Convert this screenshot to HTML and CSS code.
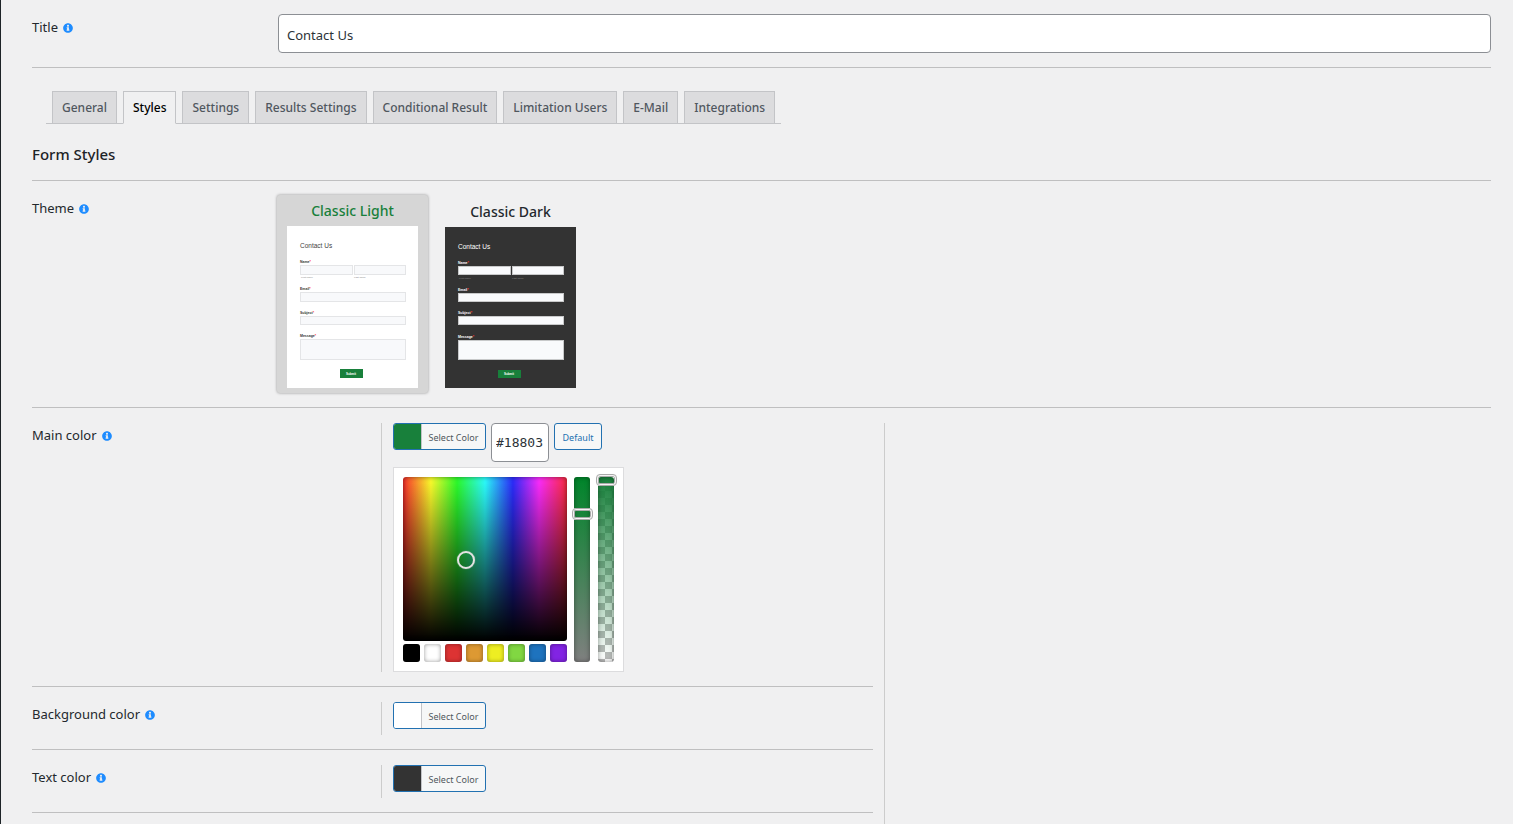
FILE: index.html
```
<!DOCTYPE html>
<html lang="en">
<head>
    <meta charset="UTF-8">
    <meta name="viewport" content="width=device-width, initial-scale=1.0">
    <title>Edit Form</title>
    <link rel="stylesheet" href="styles.css">
</head>
<body>
    <svg class="sprite" aria-hidden="true">
        <symbol id="icon-info" viewBox="0 0 512 512">
            <path d="M256 8C119 8 8 119 8 256s111 248 248 248 248-111 248-248S393 8 256 8zm0 80c28 0 50 22 50 50s-22 50-50 50-50-22-50-50 22-50 50-50zm70 296c0 7-5 12-12 12h-116c-7 0-12-5-12-12v-34c0-7 5-12 12-12h12v-64h-12c-7 0-12-5-12-12v-34c0-7 5-12 12-12h92c7 0 12 5 12 12v110h12c7 0 12 5 12 12v34z"/>
        </symbol>
    </svg>

    <main class="form-editor">
        <div class="row">
            <div class="row-label">
                <label for="form-title">Title</label>
                <a class="info" href="#" aria-label="Help"><svg><use href="#icon-info"/></svg></a>
            </div>
            <div class="row-field">
                <input type="text" id="form-title" class="text-input" value="Contact Us">
            </div>
        </div>

        <nav class="tabs">
            <a href="#general" class="tab">General</a>
            <a href="#styles" class="tab active">Styles</a>
            <a href="#settings" class="tab">Settings</a>
            <a href="#results" class="tab">Results Settings</a>
            <a href="#conditional" class="tab">Conditional Result</a>
            <a href="#limitation" class="tab">Limitation Users</a>
            <a href="#email" class="tab">E-Mail</a>
            <a href="#integrations" class="tab">Integrations</a>
        </nav>

        <h1 class="section-title">Form Styles</h1>

        <div class="row">
            <div class="row-label">
                <span>Theme</span>
                <a class="info" href="#" aria-label="Help"><svg><use href="#icon-info"/></svg></a>
            </div>
            <div class="row-field themes">
                <label class="theme selected">
                    <input type="radio" name="theme" checked>
                    <span class="theme-name">Classic Light</span>
                    <svg class="preview light" viewBox="0 0 131 162">
                        <rect class="page" width="131" height="162"/>
                        <text class="heading" x="13" y="22">Contact Us</text>
                        <text class="name" x="13" y="37">Name<tspan class="req">*</tspan></text>
                        <rect class="box" x="13.5" y="39.5" width="52" height="9"/>
                        <rect class="box" x="67.5" y="39.5" width="51" height="9"/>
                        <text class="hint" x="14" y="52">First name</text>
                        <text class="hint" x="67" y="52">Last name</text>
                        <text class="name" x="13" y="64">Email<tspan class="req">*</tspan></text>
                        <rect class="box" x="13.5" y="66.5" width="105" height="9"/>
                        <text class="name" x="13" y="88">Subject<tspan class="req">*</tspan></text>
                        <rect class="box" x="13.5" y="90.5" width="105" height="8"/>
                        <text class="name" x="13" y="111">Message<tspan class="req">*</tspan></text>
                        <rect class="box" x="13.5" y="113.5" width="105" height="20"/>
                        <rect class="submit" x="53" y="143" width="23" height="9"/>
                        <text class="submit-text" x="64" y="149">Submit</text>
                    </svg>
                </label>
                <label class="theme">
                    <input type="radio" name="theme">
                    <span class="theme-name">Classic Dark</span>
                    <svg class="preview dark" viewBox="0 0 131 161">
                        <rect class="page" width="131" height="161"/>
                        <text class="heading" x="13" y="22">Contact Us</text>
                        <text class="name" x="13" y="37">Name<tspan class="req">*</tspan></text>
                        <rect class="box" x="13.5" y="39.5" width="52" height="8"/>
                        <rect class="box" x="67.5" y="39.5" width="51" height="8"/>
                        <text class="hint" x="14" y="52">First name</text>
                        <text class="hint" x="67" y="52">Last name</text>
                        <text class="name" x="13" y="64">Email<tspan class="req">*</tspan></text>
                        <rect class="box" x="13.5" y="66.5" width="105" height="8"/>
                        <text class="name" x="13" y="87">Subject<tspan class="req">*</tspan></text>
                        <rect class="box" x="13.5" y="89.5" width="105" height="8"/>
                        <text class="name" x="13" y="111">Message<tspan class="req">*</tspan></text>
                        <rect class="box" x="13.5" y="113.5" width="105" height="19"/>
                        <rect class="submit" x="53" y="143" width="23" height="8"/>
                        <text class="submit-text" x="64" y="148">Submit</text>
                    </svg>
                </label>
            </div>
        </div>

        <div class="style-columns">
            <div class="style-options">
                <div class="option">
                    <div class="option-label">
                        <span>Main color</span>
                        <a class="info" href="#" aria-label="Help"><svg><use href="#icon-info"/></svg></a>
                    </div>
                    <div class="option-field">
                        <div class="color-controls">
                            <button type="button" class="color-button">
                                <span class="swatch green"></span>
                                <span class="color-text">Select Color</span>
                            </button>
                            <input type="text" class="hex-input" value="#18803" aria-label="Main color value">
                            <button type="button" class="default-button">Default</button>
                        </div>
                        <div class="picker">
                            <div class="picker-main">
                                <div class="square"><span class="handle"></span></div>
                                <div class="palette">
                                    <button type="button" class="black" aria-label="Black"></button>
                                    <button type="button" class="white" aria-label="White"></button>
                                    <button type="button" class="red" aria-label="Red"></button>
                                    <button type="button" class="orange" aria-label="Orange"></button>
                                    <button type="button" class="yellow" aria-label="Yellow"></button>
                                    <button type="button" class="lime" aria-label="Lime"></button>
                                    <button type="button" class="blue" aria-label="Blue"></button>
                                    <button type="button" class="purple" aria-label="Purple"></button>
                                </div>
                            </div>
                            <div class="strip saturation">
                                <input type="range" min="0" max="100" value="81" aria-label="Saturation">
                            </div>
                            <div class="strip alpha">
                                <input type="range" min="0" max="100" value="100" aria-label="Opacity">
                            </div>
                        </div>
                    </div>
                </div>

                <div class="option">
                    <div class="option-label">
                        <span>Background color</span>
                        <a class="info" href="#" aria-label="Help"><svg><use href="#icon-info"/></svg></a>
                    </div>
                    <div class="option-field">
                        <button type="button" class="color-button">
                            <span class="swatch white"></span>
                            <span class="color-text">Select Color</span>
                        </button>
                    </div>
                </div>

                <div class="option">
                    <div class="option-label">
                        <span>Text color</span>
                        <a class="info" href="#" aria-label="Help"><svg><use href="#icon-info"/></svg></a>
                    </div>
                    <div class="option-field">
                        <button type="button" class="color-button">
                            <span class="swatch dark"></span>
                            <span class="color-text">Select Color</span>
                        </button>
                    </div>
                </div>
            </div>
            <div class="style-preview"></div>
        </div>
    </main>
</body>
</html>
```

FILE: styles.css
```
* {
    box-sizing: border-box;
}

body {
    margin: 0;
    background: #f0f0f1;
    color: #23282d;
    font-family: "Noto Sans", "Open Sans", sans-serif;
    font-size: 13px;
    line-height: 20px;
}

button,
input {
    font-family: inherit;
    margin: 0;
}

.sprite {
    display: none;
}

.form-editor {
    display: flex;
    flex-direction: column;
    min-height: 100vh;
    padding: 0 22px 0 31px;
    border-left: 1px solid #1d2327;
}

.row {
    display: flex;
    padding: 14px 0;
    border-bottom: 1px solid #bfbfc0;
}

.row-label {
    flex: 0 0 246px;
    padding-top: 3px;
}

.row-field {
    flex: 1;
}

.info svg {
    width: 10px;
    height: 10px;
    margin-left: 2px;
    fill: #1e8cff;
    vertical-align: -1px;
}

.text-input {
    display: block;
    width: 100%;
    height: 39px;
    padding: 2px 8px 0;
    border: 1px solid #8c8f94;
    border-radius: 4px;
    background: #fff;
    color: #2c3338;
    font-size: 13px;
}

/* Tabs */
.tabs {
    display: flex;
    align-self: flex-start;
    gap: 6px;
    margin: 23px 0 0 14px;
    padding: 0 6px;
    border-bottom: 1px solid #c3c4c7;
}

.tab {
    height: 33px;
    margin-bottom: -1px;
    padding: 0 9px;
    border: 1px solid #c3c4c7;
    background: #dcdcde;
    color: #50575e;
    font-size: 12px;
    font-weight: 500;
    line-height: 31px;
    text-decoration: none;
}

.tab.active {
    border-bottom-color: #f0f0f1;
    background: #f0f0f1;
    color: #000;
}

.section-title {
    margin: 0;
    padding: 18px 0 14px;
    border-bottom: 1px solid #bfbfc0;
    color: #1d2327;
    font-size: 15px;
    font-weight: 500;
    line-height: 24px;
}

/* Theme cards */
.themes {
    display: flex;
    gap: 7px;
}

.theme {
    display: flex;
    flex-direction: column;
    align-items: center;
    padding: 7px 10px 5px;
    border-radius: 3px;
}

.theme.selected {
    margin-left: -1px;
    padding-top: 6px;
    background: #d6d6d6;
    box-shadow: 0 0 3px rgba(0, 0, 0, 0.4);
}

.theme.selected .theme-name {
    color: #18803b;
}

.theme input {
    position: absolute;
    opacity: 0;
}

.theme-name {
    margin-bottom: 5px;
    font-size: 14px;
    font-weight: 500;
}

.preview {
    display: block;
    width: 131px;
    height: 162px;
    font-family: "Liberation Sans", sans-serif;
}

.preview .page {
    fill: #fff;
}

.preview .heading {
    fill: #444;
    font-size: 6.5px;
}

.preview .name {
    fill: #333;
    font-size: 3.5px;
    font-weight: bold;
}

.preview .hint {
    fill: #888;
    font-size: 2.5px;
}

.preview .req {
    fill: #f33;
}

.preview .box {
    fill: #f8f9fb;
    stroke: #e4e5e7;
}

.preview .submit {
    fill: #18803b;
}

.preview .submit-text {
    fill: #fff;
    font-size: 3px;
    font-weight: bold;
    text-anchor: middle;
}

.preview.dark {
    height: 161px;
}

.preview.dark .page {
    fill: #333;
}

.preview.dark .heading,
.preview.dark .name {
    fill: #fff;
}

.preview.dark .box {
    fill: #f9fafc;
    stroke: #c8c9ca;
}

/* Color options */
.style-columns {
    display: flex;
    flex: 1;
    padding-top: 15px;
}

.style-options {
    flex: 0 0 58.4%;
    padding-right: 11px;
}

.style-preview {
    flex: 1;
    border-left: 1px solid #ccc;
}

.option {
    display: flex;
    margin-bottom: 15px;
    padding-bottom: 14px;
    border-bottom: 1px solid #bfbfc0;
}

.option-label {
    flex: 0 0 349px;
    padding-top: 2px;
}

.option-field {
    flex: 1;
    min-height: 33px;
    padding-left: 11px;
    border-left: 1px solid #ccc;
}

.color-controls {
    display: flex;
    align-items: flex-start;
    gap: 5px;
}

.color-button,
.default-button {
    height: 27px;
    padding: 0;
    border: 1px solid #2271b1;
    border-radius: 3px;
    background: #f6f7f7;
    color: #2271b1;
    font-size: 9px;
    line-height: 27px;
}

.color-button {
    display: flex;
    width: 93px;
    overflow: hidden;
}

.swatch {
    width: 28px;
    height: 25px;
    border-right: 1px solid #c3c4c7;
}

.swatch.green {
    background: #18803b;
}

.swatch.white {
    background: #fff;
}

.swatch.dark {
    background: #333;
}

.color-text {
    flex: 1;
    color: #50575e;
    text-align: center;
}

.default-button {
    width: 48px;
}

.hex-input {
    width: 58px;
    height: 39px;
    padding: 0 4px;
    border: 1px solid #8c8f94;
    border-radius: 4px;
    background: #fff;
    color: #2c3338;
    font-family: "DejaVu Sans Mono", monospace;
    font-size: 13px;
}

.picker {
    display: flex;
    width: 231px;
    margin-top: 5px;
    padding: 9px;
    border: 1px solid #dcdcde;
    background: #fff;
}

.picker-main {
    width: 164px;
    margin-right: 7px;
}

.square {
    position: relative;
    height: 164px;
    border-radius: 3px;
    background: linear-gradient(to bottom, transparent, #000),
                linear-gradient(to right, #ff302e, #ffff2c 17%, #2cff2c 33%, #2cffff 50%, #2c2cff 67%, #ff2cff 83%, #ff2c40);
    box-shadow: inset 0 0 5px rgba(0, 0, 0, 0.5);
}

.handle {
    position: absolute;
    top: 74px;
    left: 54px;
    width: 18px;
    height: 18px;
    border: 2px solid #e4e4e4;
    border-radius: 50%;
    box-shadow: 0 0 1px #ccc;
}

.palette {
    display: flex;
    gap: 4px;
    margin-top: 3px;
}

.palette button {
    width: 17px;
    height: 18px;
    padding: 0;
    border: none;
    border-radius: 3px;
    box-shadow: inset 0 0 4px rgba(0, 0, 0, 0.4);
}

.palette .black { background: #000; }
.palette .white { background: #fff; }
.palette .red { background: #d33; }
.palette .orange { background: #d93; }
.palette .yellow { background: #ee2; }
.palette .lime { background: #81d742; }
.palette .blue { background: #1e73be; }
.palette .purple { background: #8224e3; }

.strip {
    position: relative;
    width: 16px;
    height: 185px;
    border-radius: 3px;
    box-shadow: inset 0 0 5px rgba(0, 0, 0, 0.4);
}

.strip + .strip {
    margin-left: 8px;
}

.saturation {
    background: linear-gradient(#00852a, #808080);
}

.alpha {
    background: linear-gradient(#18803b, rgba(24, 128, 59, 0)),
                repeating-conic-gradient(#fff 0 25%, #bbb 0 50%) 0 0 / 14px 14px;
}

/* The sliders overhang the strips so the thumbs can pass the ends */
.strip input {
    position: absolute;
    top: -3px;
    left: -3px;
    width: 22px;
    height: 191px;
    background: none;
    writing-mode: vertical-lr;
    direction: rtl;
    appearance: none;
    -webkit-appearance: none;
}

.strip input::-webkit-slider-thumb {
    width: 21px;
    height: 12px;
    border: 2px solid #f4f4f4;
    border-radius: 4px;
    outline: 1px solid #aaa;
    outline-offset: -1px;
    box-shadow: inset 0 0 0 1px #aaa;
    -webkit-appearance: none;
}
```
